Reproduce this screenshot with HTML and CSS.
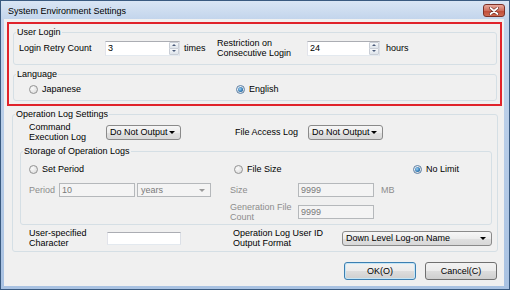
FILE: index.html
```html
<!DOCTYPE html>
<html lang="en">
<head>
    <meta charset="UTF-8">
    <title>System Environment Settings</title>
    <link rel="stylesheet" href="styles.css">
</head>
<body>
    <div class="window">
        <div class="titlebar">
            <span class="title">System Environment Settings</span>
            <span class="close">
                <svg width="10" height="8" viewBox="0 0 10 8">
                    <path d="M1.5 1 L8.5 7 M8.5 1 L1.5 7" stroke="#6b2a22" stroke-width="3" stroke-linecap="round"/>
                    <path d="M1.5 1 L8.5 7 M8.5 1 L1.5 7" stroke="#fff" stroke-width="1.8" stroke-linecap="round"/>
                </svg>
            </span>
        </div>

        <div class="client">
            <div class="highlight">
                <fieldset class="group login">
                    <legend>User Login</legend>
                    <div class="row">
                        <span class="retry-label">Login Retry Count</span>
                        <div class="edit spin retry-spin">
                            <span class="val">3</span>
                            <span class="spin-btns"><i class="up"></i><i class="down"></i></span>
                        </div>
                        <span class="unit">times</span>
                        <span class="two-line restrict-label">Restriction on<br>Consecutive Login</span>
                        <div class="edit spin hours-spin">
                            <span class="val">24</span>
                            <span class="spin-btns"><i class="up"></i><i class="down"></i></span>
                        </div>
                        <span class="hours">hours</span>
                    </div>
                </fieldset>

                <fieldset class="group language">
                    <legend>Language</legend>
                    <div class="row">
                        <span class="radio lang-ja"><span class="dot"></span>Japanese</span>
                        <span class="radio"><span class="dot on"></span>English</span>
                    </div>
                </fieldset>
            </div>

            <fieldset class="group oplog">
                <legend>Operation Log Settings</legend>
                <div class="row cmd-row">
                    <div class="left-cell">
                        <span class="two-line cmd-label">Command<br>Execution Log</span>
                        <div class="combo short-combo"><span class="val">Do Not Output</span><i class="arrow"></i></div>
                    </div>
                    <span class="file-label">File Access Log</span>
                    <div class="combo short-combo"><span class="val">Do Not Output</span><i class="arrow"></i></div>
                </div>

                <fieldset class="group storage">
                    <legend>Storage of Operation Logs</legend>
                    <div class="row radio-row">
                        <span class="radio opt-period"><span class="dot"></span>Set Period</span>
                        <span class="radio opt-size"><span class="dot"></span>File Size</span>
                        <span class="radio"><span class="dot on"></span>No Limit</span>
                    </div>
                    <div class="row period-row">
                        <div class="storage-left">
                            <span class="muted period-label">Period</span>
                            <div class="edit off period-edit"><span class="val">10</span></div>
                            <div class="combo off years-combo"><span class="val">years</span><i class="arrow"></i></div>
                        </div>
                        <span class="muted size-label">Size</span>
                        <div class="edit off size-edit"><span class="val">9999</span></div>
                        <span class="muted mb">MB</span>
                    </div>
                    <div class="row gen-row">
                        <div class="storage-left"></div>
                        <span class="muted two-line size-label">Generation File<br>Count</span>
                        <div class="edit off size-edit"><span class="val">9999</span></div>
                    </div>
                </fieldset>

                <div class="row user-row">
                    <div class="user-left">
                        <span class="two-line user-label">User-specified<br>Character</span>
                        <div class="edit user-edit"></div>
                    </div>
                    <span class="two-line format-label">Operation Log User ID<br>Output Format</span>
                    <div class="combo format-combo"><span class="val">Down Level Log-on Name</span><i class="arrow"></i></div>
                </div>
            </fieldset>

            <div class="buttons">
                <button class="btn default">OK(O)</button>
                <button class="btn">Cancel(C)</button>
            </div>
        </div>
    </div>
</body>
</html>
```

FILE: styles.css
```css
body {
    margin: 0;
    font-family: "Liberation Sans", Arial, sans-serif;
    font-size: 9px;
    color: #000;
    background: #fff;
}

.window {
    width: 510px;
    height: 290px;
    box-sizing: border-box;
    border: 1px solid #3a5a80;
    background: linear-gradient(#d9e5f4, #c3d5ec 18px, #a9c2e2);
    display: flex;
    flex-direction: column;
}

/* title bar */
.titlebar {
    height: 18px;
    display: flex;
    padding-left: 7px;
}

.title {
    line-height: 20px;
}

.close {
    margin: 3px 4px 0 auto;
    width: 22px;
    height: 13px;
    box-sizing: border-box;
    border: 1px solid #7c3128;
    border-radius: 3px;
    background: linear-gradient(#e9aa9d, #d0705f 50%, #bf4a38 51%, #cf6b52);
    display: flex;
    align-items: center;
    justify-content: center;
}

/* client area */
.client {
    flex: 1;
    margin: 0 5px 3px 3px;
    background: #f0f0f0;
    display: flex;
    flex-direction: column;
}

.highlight {
    margin: 3px 2px 0 3px;
    border: 2px solid #e0232b;
    padding: 3px 3px 3px 4px;
}

fieldset.group {
    margin: 0;
    padding: 0;
    border: 1px solid #d5dfe5;
    border-radius: 3px;
    min-width: 0;
}

legend {
    margin-left: 2px;
    padding: 0 1px;
    line-height: 11px;
}

.row {
    display: flex;
    align-items: center;
}

.two-line {
    line-height: 10px;
}

.muted {
    color: #8d8d8d;
}

.val {
    white-space: nowrap;
}

/* user login */
.login .row {
    height: 16px;
    margin-top: 2px;
    padding: 0 0 8px 5px;
}

.retry-label {
    width: 86px;
}

.retry-spin {
    width: 75px;
}

.unit {
    width: 33px;
    margin-left: 4px;
}

.restrict-label {
    width: 90px;
}

.hours-spin {
    width: 73px;
}

.hours {
    margin-left: 6px;
}

fieldset.language {
    margin-top: 4px;
}

.language .row {
    height: 16px;
    margin-top: 1px;
    padding: 0 0 3px 15px;
}

.lang-ja {
    width: 207px;
}

/* edit boxes */
.edit {
    height: 14px;
    box-sizing: border-box;
    border: 1px solid #abadb3;
    border-color: #abadb3 #dbdfe6 #e3e9ef #e2e3ea;
    background: #fff;
    padding-left: 2px;
    display: flex;
    align-items: center;
}

.edit.off {
    background: #f4f4f4;
    border-color: #b5b8bb;
    color: #7a7a7a;
}

.spin {
    height: 15px;
    padding-right: 0;
}

.spin .val {
    flex: 1;
}

.spin-btns {
    width: 10px;
    height: 13px;
    display: flex;
    flex-direction: column;
}

.spin-btns i {
    flex: 1;
    border: 1px solid #c9ced6;
    border-radius: 1px;
    background: linear-gradient(#f6f8fa, #dde3ea);
    position: relative;
}

.spin-btns i + i {
    margin-top: -1px;
}

.spin-btns i::after {
    content: "";
    position: absolute;
    left: 2px;
    top: 1px;
    border-left: 2px solid transparent;
    border-right: 2px solid transparent;
}

.spin-btns .up::after {
    border-bottom: 2px solid #4a5b7a;
}

.spin-btns .down::after {
    border-top: 2px solid #4a5b7a;
}

/* drop down lists */
.combo {
    height: 15px;
    box-sizing: border-box;
    border: 1px solid #8a8a8a;
    border-radius: 3px;
    background: linear-gradient(#f6f6f6, #ececec 50%, #e0e0e0 51%, #d8d8d8);
    padding: 0 5px 0 3px;
    display: flex;
    align-items: center;
}

.combo .val {
    flex: 1;
}

.arrow {
    width: 0;
    height: 0;
    border-left: 3px solid transparent;
    border-right: 3px solid transparent;
    border-top: 3px solid #000;
}

.combo.off {
    height: 14px;
    border-radius: 0;
    border-color: #b5b8bb;
    background: #f4f4f4;
    color: #7a7a7a;
}

.combo.off .arrow {
    border-top-color: #9a9a9a;
}

/* operation log settings */
fieldset.oplog {
    margin: 3px 6px 0 8px;
    padding: 0 5px 3px 0;
}

.cmd-row {
    height: 20px;
    margin-top: 2px;
    padding-left: 16px;
}

.left-cell {
    width: 206px;
    display: flex;
    align-items: center;
}

.cmd-label {
    width: 77px;
}

.short-combo {
    width: 75px;
}

.file-label {
    width: 73px;
}

fieldset.storage {
    margin: 4px 0 0 7px;
    padding-bottom: 2px;
}

.radio {
    display: flex;
    align-items: center;
}

.dot {
    width: 9px;
    height: 9px;
    box-sizing: border-box;
    margin-right: 4px;
    border: 1px solid #939393;
    border-radius: 50%;
    background: radial-gradient(circle at 35% 35%, #fbfbfb, #d6d6d6);
    display: flex;
    align-items: center;
    justify-content: center;
}

.dot.on {
    border-color: #5c7fa5;
}

.dot.on::after {
    content: "";
    width: 5px;
    height: 5px;
    border-radius: 50%;
    background: radial-gradient(circle at 40% 40%, #9fd2f6, #1f6aa8 70%, #174a79);
}

.radio-row {
    height: 16px;
    margin-top: 4px;
    padding-left: 8px;
}

.opt-period {
    width: 205px;
}

.opt-size {
    width: 179px;
}

.period-row {
    height: 14px;
    margin-top: 6px;
    padding-left: 8px;
}

.gen-row {
    height: 20px;
    margin-top: 5px;
    padding-left: 8px;
}

.storage-left {
    width: 201px;
    display: flex;
    align-items: center;
}

.period-label {
    width: 30px;
}

.period-edit {
    width: 76px;
}

.years-combo {
    width: 74px;
    margin-left: 2px;
}

.size-label {
    width: 68px;
}

.size-edit {
    width: 76px;
}

.mb {
    margin-left: 7px;
}

.user-row {
    height: 20px;
    margin-top: 3px;
    padding-left: 16px;
}

.user-left {
    width: 204px;
    display: flex;
    align-items: center;
}

.user-label {
    width: 78px;
}

.user-edit {
    width: 74px;
    height: 13px;
}

.format-label {
    width: 109px;
}

.format-combo {
    width: 150px;
}

/* dialog buttons */
.buttons {
    display: flex;
    justify-content: flex-end;
    gap: 9px;
    margin-top: 10px;
    padding-right: 7px;
}

.btn {
    width: 72px;
    height: 18px;
    padding: 0;
    font-family: inherit;
    font-size: 9px;
    color: #000;
    border: 1px solid #707070;
    border-radius: 3px;
    background: linear-gradient(#f2f2f2, #ebebeb 50%, #dddddd 51%, #cfcfcf);
}

.btn.default {
    border-color: #3c7fb1;
    box-shadow: inset 0 0 0 1px #c4e5f6;
}
```
